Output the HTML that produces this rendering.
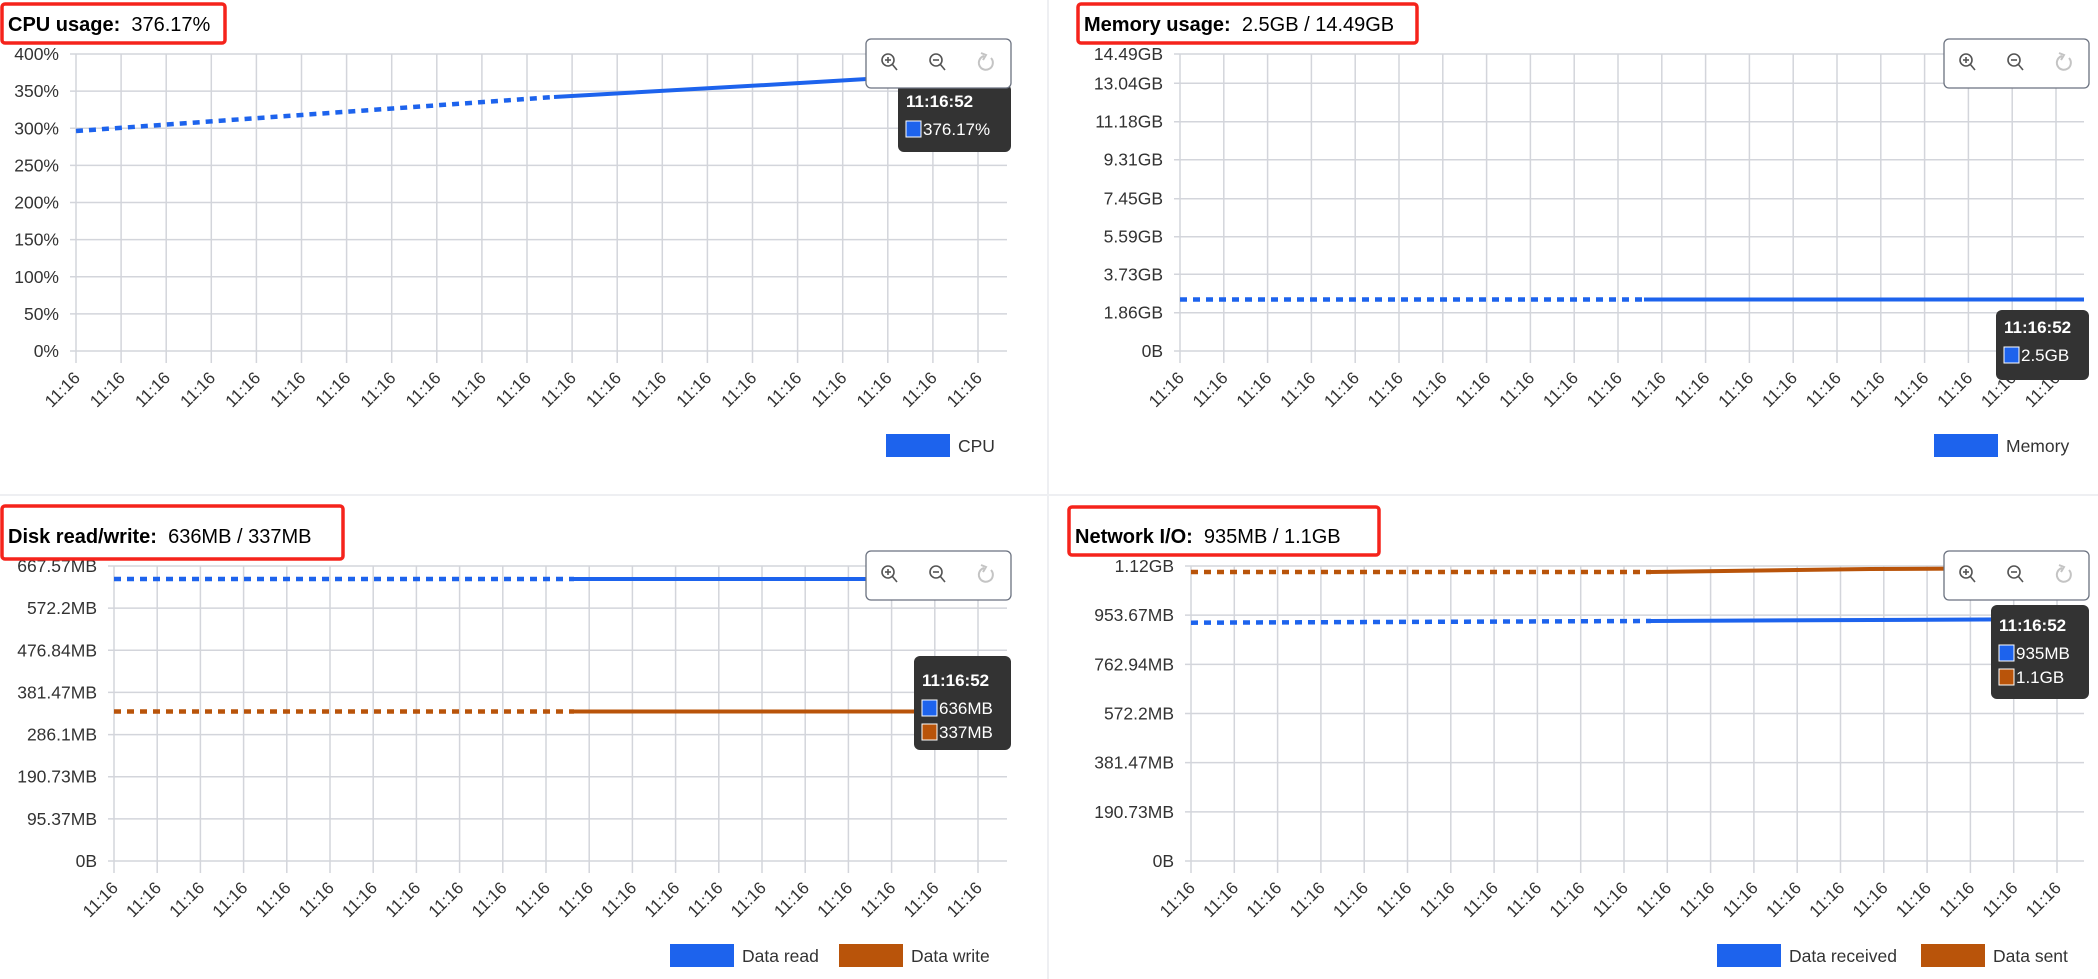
<!DOCTYPE html>
<html><head><meta charset="utf-8">
<style>
html,body{margin:0;padding:0;background:#fff;width:2098px;height:979px;overflow:hidden}
svg{position:absolute;left:0;top:0}
text{font-family:"Liberation Sans",sans-serif}
</style></head>
<body>
<svg id="s" width="2098" height="979" viewBox="0 0 2098 979" xmlns="http://www.w3.org/2000/svg">
<line x1="1048" y1="0" x2="1048" y2="979" stroke="#eeeff2" stroke-width="2"/>
<line x1="0" y1="495" x2="2098" y2="495" stroke="#eeeff2" stroke-width="2"/>
</svg>
<script>
var S=document.getElementById('s'),out='';
var BL='#1d63ed',OR='#b9540a',GR='#d3d5db';
function panel(c){
  var L=c.left,R=c.right,T=c.top,B=c.bot,o='';
  c.ylab.forEach(function(p){o+='<line x1="'+(L-6)+'" y1="'+p[1]+'" x2="'+R+'" y2="'+p[1]+'" stroke="'+GR+'" stroke-width="1.5"/>';
    o+='<text x="'+(L-17)+'" y="'+(p[1]+6)+'" font-size="17.5" fill="#333" text-anchor="end">'+p[0]+'</text>';});
  for(var i=0;i<21;i++){var x=L+i*c.sp;
    o+='<line x1="'+x+'" y1="'+T+'" x2="'+x+'" y2="'+(B+12)+'" stroke="'+GR+'" stroke-width="1.5"/>';
    o+='<text transform="translate('+(x+5)+','+(B+28)+') rotate(-45)" font-size="17" fill="#333" text-anchor="end">11:16</text>';}
  c.series.forEach(function(s){
    o+='<polyline points="'+s.d+'" fill="none" stroke="'+s.c+'" stroke-width="4.5" stroke-dasharray="7 6"/>';
    o+='<polyline points="'+s.s+'" fill="none" stroke="'+s.c+'" stroke-width="4"/>';});
  var tb=c.tbox;
  o+='<rect x="'+tb[0]+'" y="'+tb[1]+'" width="'+(tb[2]-tb[0])+'" height="'+(tb[3]-tb[1])+'" rx="3" fill="#fff" stroke="#f5231b" stroke-width="3.5"/>';
  o+='<text x="'+(tb[0]+6)+'" y="'+c.ty+'" font-size="20" fill="#000"><tspan font-weight="bold">'+c.t1+'</tspan>&#160;&#160;'+c.t2+'</text>';
  var tt=c.tt;
  o+='<rect x="'+tt[0]+'" y="'+tt[1]+'" width="'+(tt[2]-tt[0])+'" height="'+(tt[3]-tt[1])+'" rx="6" fill="#333"/>';
  o+='<text x="'+(tt[0]+8)+'" y="'+(tt[1]+c.ttoff)+'" font-size="17" font-weight="bold" fill="#fff">11:16:52</text>';
  c.ttv.forEach(function(v,k){var y=tt[1]+c.ttoff+28+k*24;
    o+='<rect x="'+(tt[0]+8)+'" y="'+(y-14)+'" width="15" height="16" fill="'+v[1]+'" stroke="#fff" stroke-width="1"/>';
    o+='<text x="'+(tt[0]+25)+'" y="'+y+'" font-size="17" fill="#fff">'+v[0]+'</text>';});
  var b=c.tb;
  o+='<rect x="'+b[0]+'" y="'+b[1]+'" width="145" height="49" rx="5" fill="#fff" stroke="#6b7280" stroke-width="1.3"/>';
  var cy=b[1]+24,x1=b[0]+22,x2=b[0]+70;
  o+='<g fill="none" stroke="#555" stroke-width="1.6"><circle cx="'+x1+'" cy="'+(cy-3)+'" r="6"/><line x1="'+(x1+4)+'" y1="'+(cy+1)+'" x2="'+(x1+9)+'" y2="'+(cy+7)+'"/><line x1="'+(x1-3)+'" y1="'+(cy-3)+'" x2="'+(x1+3)+'" y2="'+(cy-3)+'"/><line x1="'+x1+'" y1="'+(cy-6)+'" x2="'+x1+'" y2="'+cy+'"/>';
  o+='<circle cx="'+x2+'" cy="'+(cy-3)+'" r="6"/><line x1="'+(x2+4)+'" y1="'+(cy+1)+'" x2="'+(x2+9)+'" y2="'+(cy+7)+'"/><line x1="'+(x2-3)+'" y1="'+(cy-3)+'" x2="'+(x2+3)+'" y2="'+(cy-3)+'"/></g>';
  var x3=b[0]+121;
  o+='<path d="M'+(x3-3)+' '+(cy-7)+' A7 7 0 1 0 '+(x3+4)+' '+(cy-5)+'" fill="none" stroke="#c4c4c4" stroke-width="2"/><path d="M'+(x3-6)+' '+(cy-10)+' L'+(x3-1)+' '+(cy-8)+' L'+(x3-4)+' '+(cy-3)+'" fill="none" stroke="#c4c4c4" stroke-width="2"/>';
  c.leg.forEach(function(l){o+='<rect x="'+l[0]+'" y="'+c.ly+'" width="64" height="23" fill="'+l[2]+'"/><text x="'+(l[0]+72)+'" y="'+(c.ly+18)+'" font-size="17.5" fill="#333">'+l[1]+'</text>';});
  out+=o;
}
function ys(labels,T,B){var n=labels.length-1;return labels.map(function(l,i){return [l,B-(B-T)*i/n];});}
panel({left:76,right:1007,top:54,bot:351,sp:45.1,
 ylab:ys(['0%','50%','100%','150%','200%','250%','300%','350%','400%'],54,351),
 series:[{c:BL,d:'76,131 554,97',s:'554,97 783,84 900,77'}],
 tbox:[2,4,225,43],ty:31,t1:'CPU usage:',t2:'376.17%',
 tt:[898,84,1011,152],ttoff:23,ttv:[['376.17%',BL]],
 tb:[866,39],leg:[[886,'CPU',BL]],ly:434});
panel({left:1180,right:2084,top:54,bot:351,sp:43.8,
 ylab:[['0B',351],['1.86GB',312.7],['3.73GB',274.3],['5.59GB',236.7],['7.45GB',198.7],['9.31GB',159.7],['11.18GB',121.7],['13.04GB',83.3],['14.49GB',54]],
 series:[{c:BL,d:'1180,299.5 1644,299.5',s:'1644,299.5 2084,299.5'}],
 tbox:[1078,4,1417,43],ty:31,t1:'Memory usage:',t2:'2.5GB / 14.49GB',
 tt:[1996,310,2089,380],ttoff:23,ttv:[['2.5GB',BL]],
 tb:[1944,39],leg:[[1934,'Memory',BL]],ly:434});
panel({left:114,right:1007,top:566,bot:861,sp:43.2,
 ylab:ys(['0B','95.37MB','190.73MB','286.1MB','381.47MB','476.84MB','572.2MB','667.57MB'],566,861),
 series:[{c:BL,d:'114,579 574,579',s:'574,579 1007,579'},{c:OR,d:'114,711.5 574,711.5',s:'574,711.5 1007,711.5'}],
 tbox:[2,506,343,559],ty:543,t1:'Disk read/write:',t2:'636MB / 337MB',
 tt:[914,656,1011,750],ttoff:30,ttv:[['636MB',BL],['337MB',OR]],
 tb:[866,551],leg:[[670,'Data read',BL],[839,'Data write',OR]],ly:944});
panel({left:1191,right:2084,top:566,bot:861,sp:43.3,
 ylab:ys(['0B','190.73MB','381.47MB','572.2MB','762.94MB','953.67MB','1.12GB'],566,861),
 series:[{c:OR,d:'1191,572 1651,572',s:'1651,572 1870,569 2084,568'},{c:BL,d:'1191,622.7 1651,621',s:'1651,621 1870,620 2084,619'}],
 tbox:[1069,507,1379,555],ty:543,t1:'Network I/O:',t2:'935MB / 1.1GB',
 tt:[1991,605,2089,699],ttoff:26,ttv:[['935MB',BL],['1.1GB',OR]],
 tb:[1944,551],leg:[[1717,'Data received',BL],[1921,'Data sent',OR]],ly:944});
S.insertAdjacentHTML('beforeend',out);
</script>
</body></html>
